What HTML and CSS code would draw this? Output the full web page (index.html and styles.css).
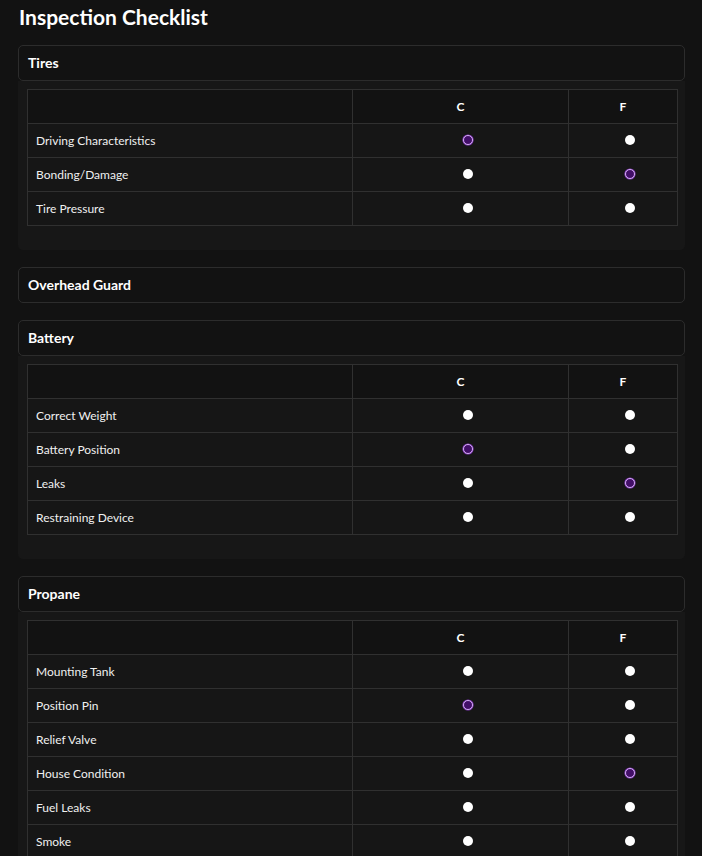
FILE: index.html
```html
<!DOCTYPE html>
<html lang="en">
<head>
<meta charset="utf-8">
<title>Inspection Checklist</title>
<link rel="stylesheet" href="styles.css">
</head>
<body>
<main class="page">
  <h1 class="title">Inspection Checklist</h1>

  <section class="card">
    <div class="card-header">Tires</div>
    <div class="card-body">
      <table class="grid">
        <colgroup><col class="c-label"><col class="c-c"><col class="c-f"></colgroup>
        <thead><tr><th></th><th>C</th><th>F</th></tr></thead>
        <tbody>
          <tr><td>Driving Characteristics</td><td class="opt"><span class="radio on"></span></td><td class="opt"><span class="radio"></span></td></tr>
          <tr><td>Bonding/Damage</td><td class="opt"><span class="radio"></span></td><td class="opt"><span class="radio on"></span></td></tr>
          <tr><td>Tire Pressure</td><td class="opt"><span class="radio"></span></td><td class="opt"><span class="radio"></span></td></tr>
        </tbody>
      </table>
    </div>
  </section>

  <section class="card">
    <div class="card-header">Overhead Guard</div>
  </section>

  <section class="card">
    <div class="card-header">Battery</div>
    <div class="card-body">
      <table class="grid">
        <colgroup><col class="c-label"><col class="c-c"><col class="c-f"></colgroup>
        <thead><tr><th></th><th>C</th><th>F</th></tr></thead>
        <tbody>
          <tr><td>Correct Weight</td><td class="opt"><span class="radio"></span></td><td class="opt"><span class="radio"></span></td></tr>
          <tr><td>Battery Position</td><td class="opt"><span class="radio on"></span></td><td class="opt"><span class="radio"></span></td></tr>
          <tr><td>Leaks</td><td class="opt"><span class="radio"></span></td><td class="opt"><span class="radio on"></span></td></tr>
          <tr><td>Restraining Device</td><td class="opt"><span class="radio"></span></td><td class="opt"><span class="radio"></span></td></tr>
        </tbody>
      </table>
    </div>
  </section>

  <section class="card">
    <div class="card-header">Propane</div>
    <div class="card-body">
      <table class="grid">
        <colgroup><col class="c-label"><col class="c-c"><col class="c-f"></colgroup>
        <thead><tr><th></th><th>C</th><th>F</th></tr></thead>
        <tbody>
          <tr><td>Mounting Tank</td><td class="opt"><span class="radio"></span></td><td class="opt"><span class="radio"></span></td></tr>
          <tr><td>Position Pin</td><td class="opt"><span class="radio on"></span></td><td class="opt"><span class="radio"></span></td></tr>
          <tr><td>Relief Valve</td><td class="opt"><span class="radio"></span></td><td class="opt"><span class="radio"></span></td></tr>
          <tr><td>House Condition</td><td class="opt"><span class="radio"></span></td><td class="opt"><span class="radio on"></span></td></tr>
          <tr><td>Fuel Leaks</td><td class="opt"><span class="radio"></span></td><td class="opt"><span class="radio"></span></td></tr>
          <tr><td>Smoke</td><td class="opt"><span class="radio"></span></td><td class="opt"><span class="radio"></span></td></tr>
        </tbody>
      </table>
    </div>
  </section>
</main>
</body>
</html>
```

FILE: styles.css
```css
html, body {
  margin: 0;
  padding: 0;
  background: #121212;
  color: #f2f2f2;
  font-family: Lato, "Noto Sans", "Liberation Sans", sans-serif;
}

.page {
  padding: 0 17px 40px 18px;
}

.title {
  margin: 0;
  padding: 2px 0 14px 1px;
  font-size: 21px;
  line-height: 29px;
  font-weight: 700;
  color: #ffffff;
}

.card {
  margin-bottom: 17px;
}

.card-header {
  height: 34px;
  line-height: 34px;
  padding: 0 9px;
  border: 1px solid #2c2c2c;
  border-radius: 5px;
  background: #121212;
  font-size: 14px;
  font-weight: 700;
  color: #ffffff;
}

.card-body {
  background: #171717;
  padding: 8px 8px 24px 9px;
  border-radius: 0 0 5px 5px;
}

.grid {
  width: 650px;
  border-collapse: collapse;
  table-layout: fixed;
  font-size: 12px;
}

.c-label { width: 325px; }
.c-c { width: 216px; }
.c-f { width: 109px; }

.grid th,
.grid td {
  border: 1px solid #303030;
  height: 34px;
  padding: 0 8px;
  box-sizing: border-box;
}

.grid thead th {
  background: #121212;
  font-weight: 700;
  font-size: 12px;
  text-align: center;
  color: #ffffff;
}

.grid tbody td {
  background: #161616;
  color: #f0f0f0;
}

.grid td.opt {
  padding: 0;
  vertical-align: middle;
}

.radio {
  display: block;
  box-sizing: border-box;
  width: 10px;
  height: 10px;
  margin: -2px 0 0 calc(50% + 2px);
  border-radius: 50%;
  background: #ffffff;
}

.radio.on {
  background: #420e68;
  border: 1.5px solid #d4aef2;
  box-shadow: 0 0 0 0.6px #8a3cc4;
}
```
